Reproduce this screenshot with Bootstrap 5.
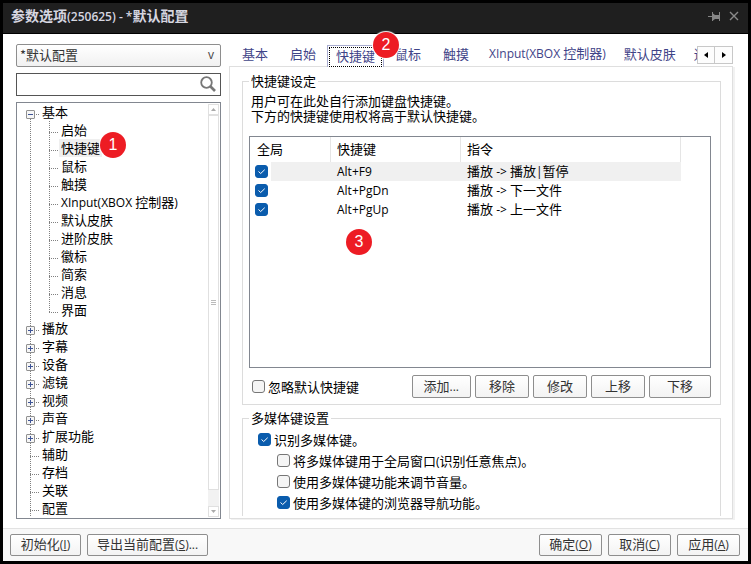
<!DOCTYPE html>
<html lang="zh-CN">
<head>
<meta charset="utf-8">
<meta name="viewport" content="width=device-width, initial-scale=1">
<title>参数选项</title>
<link rel="stylesheet" href="https://cdn.jsdelivr.net/npm/bootstrap@5.3.0/dist/css/bootstrap.min.css">
<style>
body { font: 13px/15px "Noto Sans CJK SC", sans-serif; color: #000; background: #000; }
.en { font-family: "Open Sans", "Noto Sans", sans-serif; font-size: 12px; }
.window { border: 3px solid #000; background: #fff; }
.titlebar { background: #1f1f1f; color: #d6d6e0; border-bottom: 1px solid #000; height: 31px; padding: 0 9px 4px 8px; font-size: 14px; font-weight: 700; }
.titlebar .en { font-weight: 600; }
.titlebar button { line-height: 0; }
.main-area { padding: 10px 15px 9px 13px; gap: 8px; min-height: 0; }
.sidebar { flex: 0 0 205px; gap: 6px; min-height: 0; }
.profile-box { position: relative; }
.profile-box select { appearance: none; width: 100%; height: 23px; border: 1px solid #8e8e8e; border-radius: 2px; background: linear-gradient(#fff, #f1f1f1); padding: 0 3px 2px; font-size: 13px; line-height: 18px; color: #333; display: block; }
.profile-box span { position: absolute; right: 7px; top: 3px; color: #444; pointer-events: none; }
.search-box { border: 1px solid #555; height: 23px; }
.search-box input { border: 0; outline: 0; padding: 0 4px; min-width: 0; background: transparent; }
.tree-box { border: 1px solid #828790; overflow: hidden; min-height: 0; }
.tree, .tree ul { list-style: none; margin: 0; padding: 0; }
.tree { align-self: flex-start; background: repeating-linear-gradient(#808080 0 1px, transparent 1px 2px) 13px 12px / 1px 100% no-repeat; }
.tree-row { display: flex; align-items: center; height: 18px; padding-left: 13px; background: repeating-linear-gradient(90deg, #808080 0 1px, transparent 1px 2px) 13px 11px / 9px 1px no-repeat; }
.tree-row a { margin-left: 10px; padding: 0 2px; line-height: 18px; }
.tree ul { margin-left: 19px; background: repeating-linear-gradient(#808080 0 1px, transparent 1px 2px) 13px 0 / 1px calc(100% - 6px) no-repeat; }
.tree a { color: #000; text-decoration: none; white-space: nowrap; position: relative; }
.tree a.current { background: #efefef; }
.toggle { width: 9px; height: 9px; margin: 5px -5px 0 -4px; padding: 0; border: 1px solid #919191; border-radius: 1px; background: linear-gradient(#3e5496, #3e5496) center / 5px 1px no-repeat, #f6f6f6; }
.toggle.plus { background: linear-gradient(#3e5496, #3e5496) center / 5px 1px no-repeat, linear-gradient(#3e5496, #3e5496) center / 1px 5px no-repeat, #f6f6f6; }
.vscroll { width: 11px; margin: 1px; background: #f2f2f2; }
.vscroll button { height: 11px; border: 1px solid #e0e0e0; background: #fff; padding: 0; line-height: 0; }
.vscroll .thumb { border: 1px solid #e0e0e0; background: #fff; margin-bottom: 16px; }
.step { position: absolute; width: 26px; height: 26px; border-radius: 50%; background: #ed1c24; color: #fff; font: 16px/26px "Liberation Sans", sans-serif; text-align: center; z-index: 5; box-shadow: 0 0 1px 1px #fff; }
.step-tree { left: 41px; top: -7px; }
.step-tab { left: 144px; top: -13px; }
.step-list { left: 96px; top: 92px; }
.content { min-width: 0; min-height: 0; }
.tab-strip { position: relative; z-index: 1; margin: 1px 0 -1px; height: 22px; padding-left: 2px; }
.tab-clip { overflow: hidden; min-width: 0; }
.tab-clip button { border: 0; background: none; color: #3f4488; flex: none; min-width: 48px; padding: 0 9px 5px; white-space: nowrap; font-size: 13px; line-height: 16px; }
.tab-clip button.current { border: 1px solid #a8acd0; border-bottom: 0; background: #fff; padding: 1px; }
.tab-clip button.current span { display: block; border: 1px dotted #000; padding: 0 6px 2px; line-height: 16px; }
.tab-arrows button { width: 18px; height: 18px; margin-top: 1px; border: 1px solid #c8c8c8; background: #fdfdfd; padding: 0; line-height: 0; }
.pane { border: 1px solid #dfdfdf; box-shadow: 2px 1px 0 #f2f2f2; padding: 6px 11px 2px 12px; min-height: 0; }
.group { border: 1px solid #dcdcdc; padding: 0 9px 6px 6px; min-width: 0; }
.group legend { font-size: 13px; line-height: 16px; padding: 0 2px; margin: 0; }
.group.open { border-bottom: 0; margin-top: 5px; padding-bottom: 3px; }
.intro { padding: 4px 2px 0; }
.list-box { border: 1px solid #828790; margin-top: 13px; }
.list-box table { border-collapse: separate; border-spacing: 0; width: 431px; table-layout: fixed; }
.list-box th { font-weight: 400; height: 25px; padding: 0 6px 2px; border-right: 1px solid #e5e5e5; }
.list-box th:first-child { padding-left: 7px; }
.list-box td { height: 19px; padding: 0 6px; }
.list-box td:first-child { padding-left: 5px; }
.list-box th, .list-box td { vertical-align: middle; line-height: 18px; }
.selected td { background: #f0f0f0; }
.selected td:first-child { background: linear-gradient(90deg, #fff 21px, #f0f0f0 21px); }
.tick { appearance: none; width: 13px; height: 13px; margin: 0; border: 1px solid #767676; border-radius: 3px; background: #f5f5f5; flex: none; display: block; }
.tick:checked { border-color: #0a5cad; background: #0a5cad url("data:image/svg+xml,%3Csvg xmlns='http://www.w3.org/2000/svg' viewBox='0 0 11 11'%3E%3Cpath d='M2.5 5.5 4.7 7.5 8.7 3.7' fill='none' stroke='%23fff'/%3E%3C/svg%3E") center / 11px no-repeat; }
.opt { display: flex; align-items: center; gap: 3px; height: 21px; }
.actions { gap: 4px; padding-left: 3px; margin-top: 7px; }
.media-opts { padding: 3px 0 0 9px; }
.media-opts .sub { margin-left: 19px; }
.cmd { border: 1px solid #8e8e8e; border-radius: 2px; background: linear-gradient(#fff, #f3f3f3); color: #333; font-size: 13px; line-height: 17px; height: 23px; min-width: 54px; padding: 0 11px 2px; white-space: nowrap; }
.cmd.wide { padding: 0 17px 2px; }
.footer-bar { border-top: 1px solid #e2e2e2; background: #f8f8f8; padding: 5px 8px 5px 7px; gap: 6px; }
.footer-bar .cmd { height: 22px; min-width: 63px; padding: 0 9px 2px; }
.footer-bar .cmd:first-child { min-width: 71px; }
</style>
<script src="https://cdn.jsdelivr.net/npm/bootstrap@5.3.0/dist/js/bootstrap.bundle.min.js"></script>
</head>
<body>
<div class="window d-flex flex-column vh-100 overflow-hidden">
  <header class="titlebar d-flex align-items-center flex-shrink-0">
    <span class="me-auto">参数选项<span class="en">(250625) - *</span>默认配置</span>
    <button class="border-0 bg-transparent p-0 me-2" aria-label="置顶"><svg width="13" height="12" viewBox="0 0 13 12" fill="none" stroke="#858585"><path d="M0 6.5h4M4.5 2v9M11.5 2v9"/><path fill="#858585" stroke="none" d="M5 3.5 7 5h4v4H7l-2 1.500z"/></svg></button>
    <button class="border-0 bg-transparent p-0" aria-label="关闭"><svg width="10" height="10" viewBox="0 0 10 10" stroke="#8a8a8a" stroke-width="1.4"><path d="M1 1l8 8M9 1l-8 8"/></svg></button>
  </header>

  <main class="main-area d-flex flex-grow-1">
    <aside class="sidebar d-flex flex-column">
      <div class="profile-box"><select aria-label="配置"><option>*默认配置</option></select><span class="en">v</span></div>
      <div class="search-box d-flex align-items-center">
        <input class="flex-grow-1" type="text" aria-label="搜索">
        <svg class="me-1" width="16" height="17" viewBox="0 0 16 17" fill="none" stroke="#777"><circle cx="6.5" cy="6.5" r="5.3" stroke-width="1.8"/><path d="M10.5 10.5 15 15" stroke-width="2.6"/></svg>
      </div>
      <div class="tree-box d-flex flex-grow-1">
        <ul class="tree me-auto">
          <li><div class="tree-row"><button class="toggle" aria-label="折叠"></button><a href="#">基本</a></div>
            <ul>
              <li class="tree-row"><a href="#">启始</a></li>
              <li class="tree-row"><a class="current" href="#">快捷键<span class="step step-tree">1</span></a></li>
              <li class="tree-row"><a href="#">鼠标</a></li>
              <li class="tree-row"><a href="#">触摸</a></li>
              <li class="tree-row"><a href="#"><span class="en">XInput(XBOX </span>控制器<span class="en">)</span></a></li>
              <li class="tree-row"><a href="#">默认皮肤</a></li>
              <li class="tree-row"><a href="#">进阶皮肤</a></li>
              <li class="tree-row"><a href="#">徽标</a></li>
              <li class="tree-row"><a href="#">简索</a></li>
              <li class="tree-row"><a href="#">消息</a></li>
              <li class="tree-row"><a href="#">界面</a></li>
            </ul>
          </li>
          <li class="tree-row"><button class="toggle plus" aria-label="展开"></button><a href="#">播放</a></li>
          <li class="tree-row"><button class="toggle plus" aria-label="展开"></button><a href="#">字幕</a></li>
          <li class="tree-row"><button class="toggle plus" aria-label="展开"></button><a href="#">设备</a></li>
          <li class="tree-row"><button class="toggle plus" aria-label="展开"></button><a href="#">滤镜</a></li>
          <li class="tree-row"><button class="toggle plus" aria-label="展开"></button><a href="#">视频</a></li>
          <li class="tree-row"><button class="toggle plus" aria-label="展开"></button><a href="#">声音</a></li>
          <li class="tree-row"><button class="toggle plus" aria-label="展开"></button><a href="#">扩展功能</a></li>
          <li class="tree-row"><a href="#">辅助</a></li>
          <li class="tree-row"><a href="#">存档</a></li>
          <li class="tree-row"><a href="#">关联</a></li>
          <li class="tree-row"><a href="#">配置</a></li>
        </ul>
        <div class="vscroll d-flex flex-column">
          <button aria-label="向上"><svg width="5" height="3" fill="#aaa"><path d="M0 3 2.5 0 5 3z"/></svg></button>
          <div class="thumb flex-grow-1 d-flex align-items-center justify-content-center"><svg width="5" height="5" stroke="#bbb"><path d="M0 .5h5M0 2.5h5M0 4.5h5"/></svg></div>
          <button aria-label="向下"><svg width="5" height="3" fill="#aaa"><path d="M0 0 2.5 3 5 0z"/></svg></button>
        </div>
      </div>
    </aside>

    <section class="content d-flex flex-column flex-grow-1">
      <div class="tab-strip d-flex">
        <nav class="tab-clip d-flex flex-grow-1">
          <button>基本</button><button>启始</button><button class="current"><span>快捷键</span></button><button>鼠标</button><button>触摸</button><button><span class="en">XInput(XBOX </span>控制器<span class="en">)</span></button><button>默认皮肤</button><button>进阶皮肤</button>
        </nav>
        <div class="tab-arrows d-flex">
          <button aria-label="向左"><svg width="4" height="6"><path d="M4 0v6L0 3z"/></svg></button><button class="border-start-0" aria-label="向右"><svg width="4" height="6"><path d="M0 0v6l4-3z"/></svg></button>
        </div>
        <span class="step step-tab">2</span>
      </div>
      <div class="pane d-flex flex-column flex-grow-1">
        <fieldset class="group d-flex flex-column flex-grow-1">
          <legend class="float-none w-auto">快捷键设定</legend>
          <p class="mb-0 intro">用户可在此处自行添加键盘快捷键。<br>下方的快捷键使用权将高于默认快捷键。</p>
          <div class="list-box flex-grow-1 position-relative">
            <table>
              <colgroup><col style="width:81px"><col style="width:130px"><col></colgroup>
              <thead><tr><th>全局</th><th>快捷键</th><th>指令</th></tr></thead>
              <tbody>
                <tr class="selected"><td><input class="tick" type="checkbox" checked aria-label="全局"></td><td class="en">Alt+F9</td><td>播放<span class="en"> -&gt; </span>播放<span class="en">|</span>暂停</td></tr>
                <tr><td><input class="tick" type="checkbox" checked aria-label="全局"></td><td class="en">Alt+PgDn</td><td>播放<span class="en"> -&gt; </span>下一文件</td></tr>
                <tr><td><input class="tick" type="checkbox" checked aria-label="全局"></td><td class="en">Alt+PgUp</td><td>播放<span class="en"> -&gt; </span>上一文件</td></tr>
              </tbody>
            </table>
            <span class="step step-list">3</span>
          </div>
          <div class="d-flex align-items-center actions">
            <label class="opt me-auto"><input class="tick" type="checkbox">忽略默认快捷键</label>
            <button class="cmd">添加<span class="en">...</span></button>
            <button class="cmd">移除</button>
            <button class="cmd">修改</button>
            <button class="cmd">上移</button>
            <button class="cmd wide">下移</button>
          </div>
        </fieldset>
        <fieldset class="group open">
          <legend class="float-none w-auto">多媒体键设置</legend>
          <div class="media-opts">
            <label class="opt"><input class="tick" type="checkbox" checked>识别多媒体键。</label>
            <label class="opt sub"><input class="tick" type="checkbox"><span>将多媒体键用于全局窗口<span class="en">(</span>识别任意焦点<span class="en">)</span>。</span></label>
            <label class="opt sub"><input class="tick" type="checkbox">使用多媒体键功能来调节音量。</label>
            <label class="opt sub"><input class="tick" type="checkbox" checked>使用多媒体键的浏览器导航功能。</label>
          </div>
        </fieldset>
      </div>
    </section>
  </main>

  <footer class="footer-bar d-flex align-items-center flex-shrink-0">
    <button class="cmd">初始化<span class="en">(<u>I</u>)</span></button>
    <button class="cmd me-auto">导出当前配置<span class="en">(<u>S</u>)...</span></button>
    <button class="cmd">确定<span class="en">(<u>O</u>)</span></button>
    <button class="cmd">取消<span class="en">(<u>C</u>)</span></button>
    <button class="cmd">应用<span class="en">(<u>A</u>)</span></button>
  </footer>
</div>
</body>
</html>
